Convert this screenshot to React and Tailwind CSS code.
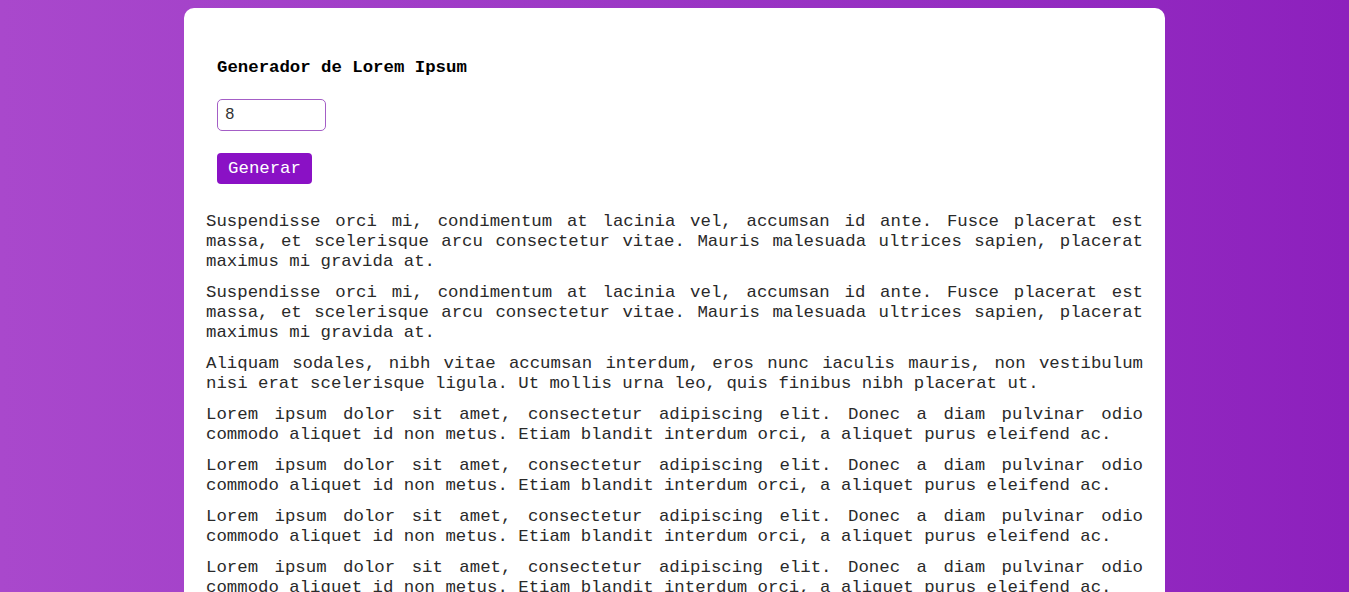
export default function App() {
  const s1 = "Suspendisse orci mi, condimentum at lacinia vel, accumsan id ante. Fusce placerat est massa, et scelerisque arcu consectetur vitae. Mauris malesuada ultrices sapien, placerat maximus mi gravida at.";
  const s2 = "Aliquam sodales, nibh vitae accumsan interdum, eros nunc iaculis mauris, non vestibulum nisi erat scelerisque ligula. Ut mollis urna leo, quis finibus nibh placerat ut.";
  const s3 = "Lorem ipsum dolor sit amet, consectetur adipiscing elit. Donec a diam pulvinar odio commodo aliquet id non metus. Etiam blandit interdum orci, a aliquet purus eleifend ac.";
  const paras = [s1, s1, s2, s3, s3, s3, s3, s3];
  return (
    <div className="min-h-screen bg-gradient-to-r from-[#a948cc] to-[#8d20bd] pt-[8px] overflow-hidden" style={{ fontFamily: '"Liberation Mono", "Courier New", monospace' }}>
      <div className="mx-auto w-[981px] bg-white rounded-[10px] px-[22px] pt-[50px] pb-[20px] text-[17.35px]">
        <div className="pl-[11px]">
          <h1 className="font-bold leading-[20px] text-black">Generador de Lorem Ipsum</h1>
          <input
            type="number"
            defaultValue="8"
            className="block mt-[21px] w-[109px] h-[32px] border border-[#a45ec6] rounded-[5px] px-[7px] text-[16px] text-[#333] outline-none"
            style={{ fontFamily: '"Liberation Mono", "Courier New", monospace' }}
          />
          <button className="block mt-[22px] w-[95px] h-[31px] bg-[#8a11c5] rounded-[4px] text-white leading-[20px]">
            Generar
          </button>
        </div>
        <div className="mt-[28px]">
          {paras.map((p, i) => (
            <p key={i} className="text-justify leading-[20px] text-[#2a2a2a] mb-[11px]">{p}</p>
          ))}
        </div>
      </div>
    </div>
  );
}
